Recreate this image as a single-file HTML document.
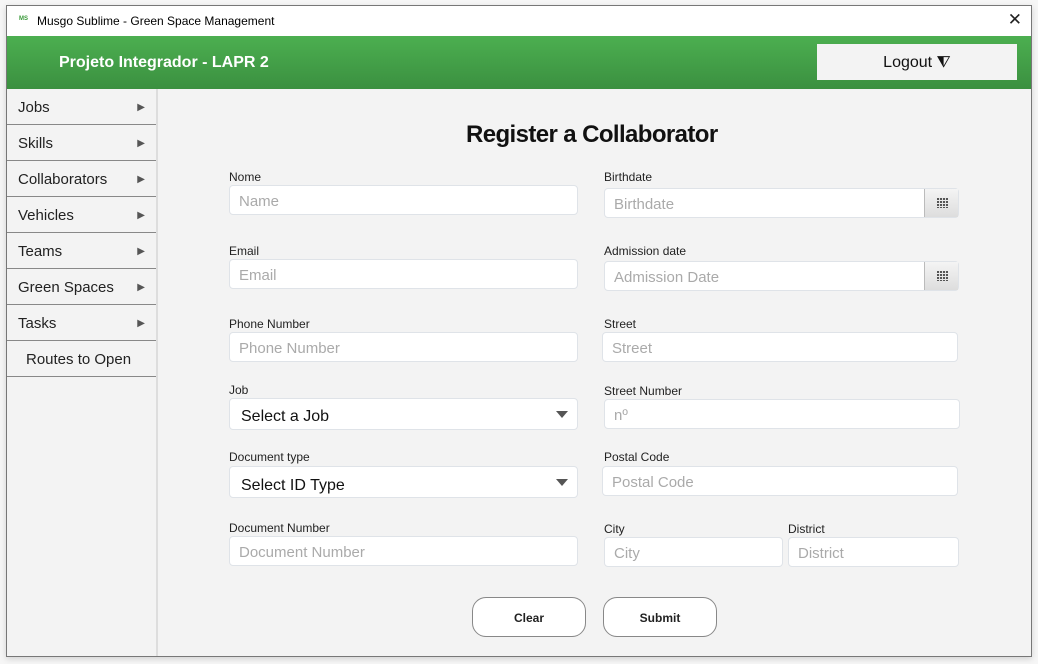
<!DOCTYPE html>
<html><head><style>
*{box-sizing:border-box;margin:0;padding:0}
body{width:1038px;height:664px;background:#f6f6f6;position:relative;overflow:hidden;font-family:"Liberation Sans","DejaVu Sans",sans-serif}
.win{position:absolute;left:6px;top:5px;width:1026px;height:652px;border:1px solid #777;background:#f3f3f3;box-shadow:0 2px 6px rgba(0,0,0,.15)}
.title{position:absolute;left:0;top:0;width:1024px;height:30px;background:#fff;font-size:12px;color:#000}
.title .t{position:absolute;left:30px;top:8px}
.logo{position:absolute;left:12px;top:10px;font-size:6px;color:#3a9a3a;font-weight:bold}
.close{position:absolute;right:9px;top:4px;font-size:17px;font-weight:100;color:#222}
.hdr{position:absolute;left:0;top:30px;width:1024px;height:53px;background:linear-gradient(#4caf50,#3b9040)}
.hdr .h{position:absolute;left:52px;top:18px;color:#fff;font-weight:bold;font-size:16px}
.logout{position:absolute;left:810px;top:8px;width:200px;height:36px;background:#f3f3f3;text-align:center;line-height:38px;font-size:16px;color:#111}
.side{position:absolute;left:0;top:83px;width:151px;height:567px;background:#f3f3f3;border-right:2px solid #ddd}
.it{height:36px;border-bottom:1px solid #888;font-size:15px;color:#222;padding-left:11px;line-height:37px;position:relative}
.it span{position:absolute;right:11px;font-size:10px;color:#555}
h1{position:absolute;left:466px;top:121px;font-size:24px;font-weight:bold;color:#111;letter-spacing:-.6px}
.lb{position:absolute;font-size:12px;color:#222}
.in{position:absolute;background:#fff;border:1px solid #dfe3e8;border-radius:4px;font-size:15px;color:#aaa;padding-left:9px;line-height:32px;height:30px}
.cb{color:#111;font-size:16px}
.cb:after{content:"";position:absolute;right:9px;top:12px;border-left:6px solid transparent;border-right:6px solid transparent;border-top:7px solid #555}
.cal{position:absolute;right:0;top:0;width:34px;height:28px;background:linear-gradient(#f4f4f4,#ddd);border-left:1px solid #bbb}
.cal:after{content:"";position:absolute;left:12px;top:9px;width:11px;height:10px;background:repeating-linear-gradient(90deg,#555 0 2px,#ddd 2px 3px),#555;-webkit-mask:repeating-linear-gradient(#000 0 2px,transparent 2px 3px)}
.btn{position:absolute;top:597px;width:114px;height:40px;border:1px solid #888;border-radius:14px;background:#fff;text-align:center;line-height:40px;font-size:12px;font-weight:bold;color:#222}
</style></head><body>
<div class="win">
<div class="title"><span class="logo">MS</span><span class="t">Musgo Sublime - Green Space Management</span><span class="close">✕</span></div>
<div class="hdr"><span class="h">Projeto Integrador - LAPR 2</span><div class="logout">Logout ⧨</div></div>
<div class="side">
<div class="it">Jobs<span>▶</span></div>
<div class="it">Skills<span>▶</span></div>
<div class="it">Collaborators<span>▶</span></div>
<div class="it">Vehicles<span>▶</span></div>
<div class="it">Teams<span>▶</span></div>
<div class="it">Green Spaces<span>▶</span></div>
<div class="it">Tasks<span>▶</span></div>
<div class="it" style="padding-left:19px">Routes to Open</div>
</div>
</div>
<h1>Register a Collaborator</h1>
<div class="lb" style="left:229px;top:170px">Nome</div>
<div class="in" style="left:229px;top:185px;width:349px">Name</div>
<div class="lb" style="left:604px;top:170px">Birthdate</div>
<div class="in" style="left:604px;top:188px;width:355px">Birthdate<div class="cal"></div></div>
<div class="lb" style="left:229px;top:244px">Email</div>
<div class="in" style="left:229px;top:259px;width:349px">Email</div>
<div class="lb" style="left:604px;top:244px">Admission date</div>
<div class="in" style="left:604px;top:261px;width:355px">Admission Date<div class="cal"></div></div>
<div class="lb" style="left:229px;top:317px">Phone Number</div>
<div class="in" style="left:229px;top:332px;width:349px">Phone Number</div>
<div class="lb" style="left:604px;top:317px">Street</div>
<div class="in" style="left:602px;top:332px;width:356px">Street</div>
<div class="lb" style="left:229px;top:383px">Job</div>
<div class="in cb" style="left:229px;top:398px;width:349px;height:32px;padding-left:11px;line-height:35px">Select a Job</div>
<div class="lb" style="left:604px;top:384px">Street Number</div>
<div class="in" style="left:604px;top:399px;width:356px">nº</div>
<div class="lb" style="left:229px;top:450px">Document type</div>
<div class="in cb" style="left:229px;top:466px;width:349px;height:32px;padding-left:11px;line-height:37px">Select ID Type</div>
<div class="lb" style="left:604px;top:450px">Postal Code</div>
<div class="in" style="left:602px;top:466px;width:356px">Postal Code</div>
<div class="lb" style="left:229px;top:521px">Document Number</div>
<div class="in" style="left:229px;top:536px;width:349px">Document Number</div>
<div class="lb" style="left:604px;top:522px">City</div>
<div class="in" style="left:604px;top:537px;width:179px">City</div>
<div class="lb" style="left:788px;top:522px">District</div>
<div class="in" style="left:788px;top:537px;width:171px">District</div>
<div class="btn" style="left:472px">Clear</div>
<div class="btn" style="left:603px">Submit</div>
</body></html>
